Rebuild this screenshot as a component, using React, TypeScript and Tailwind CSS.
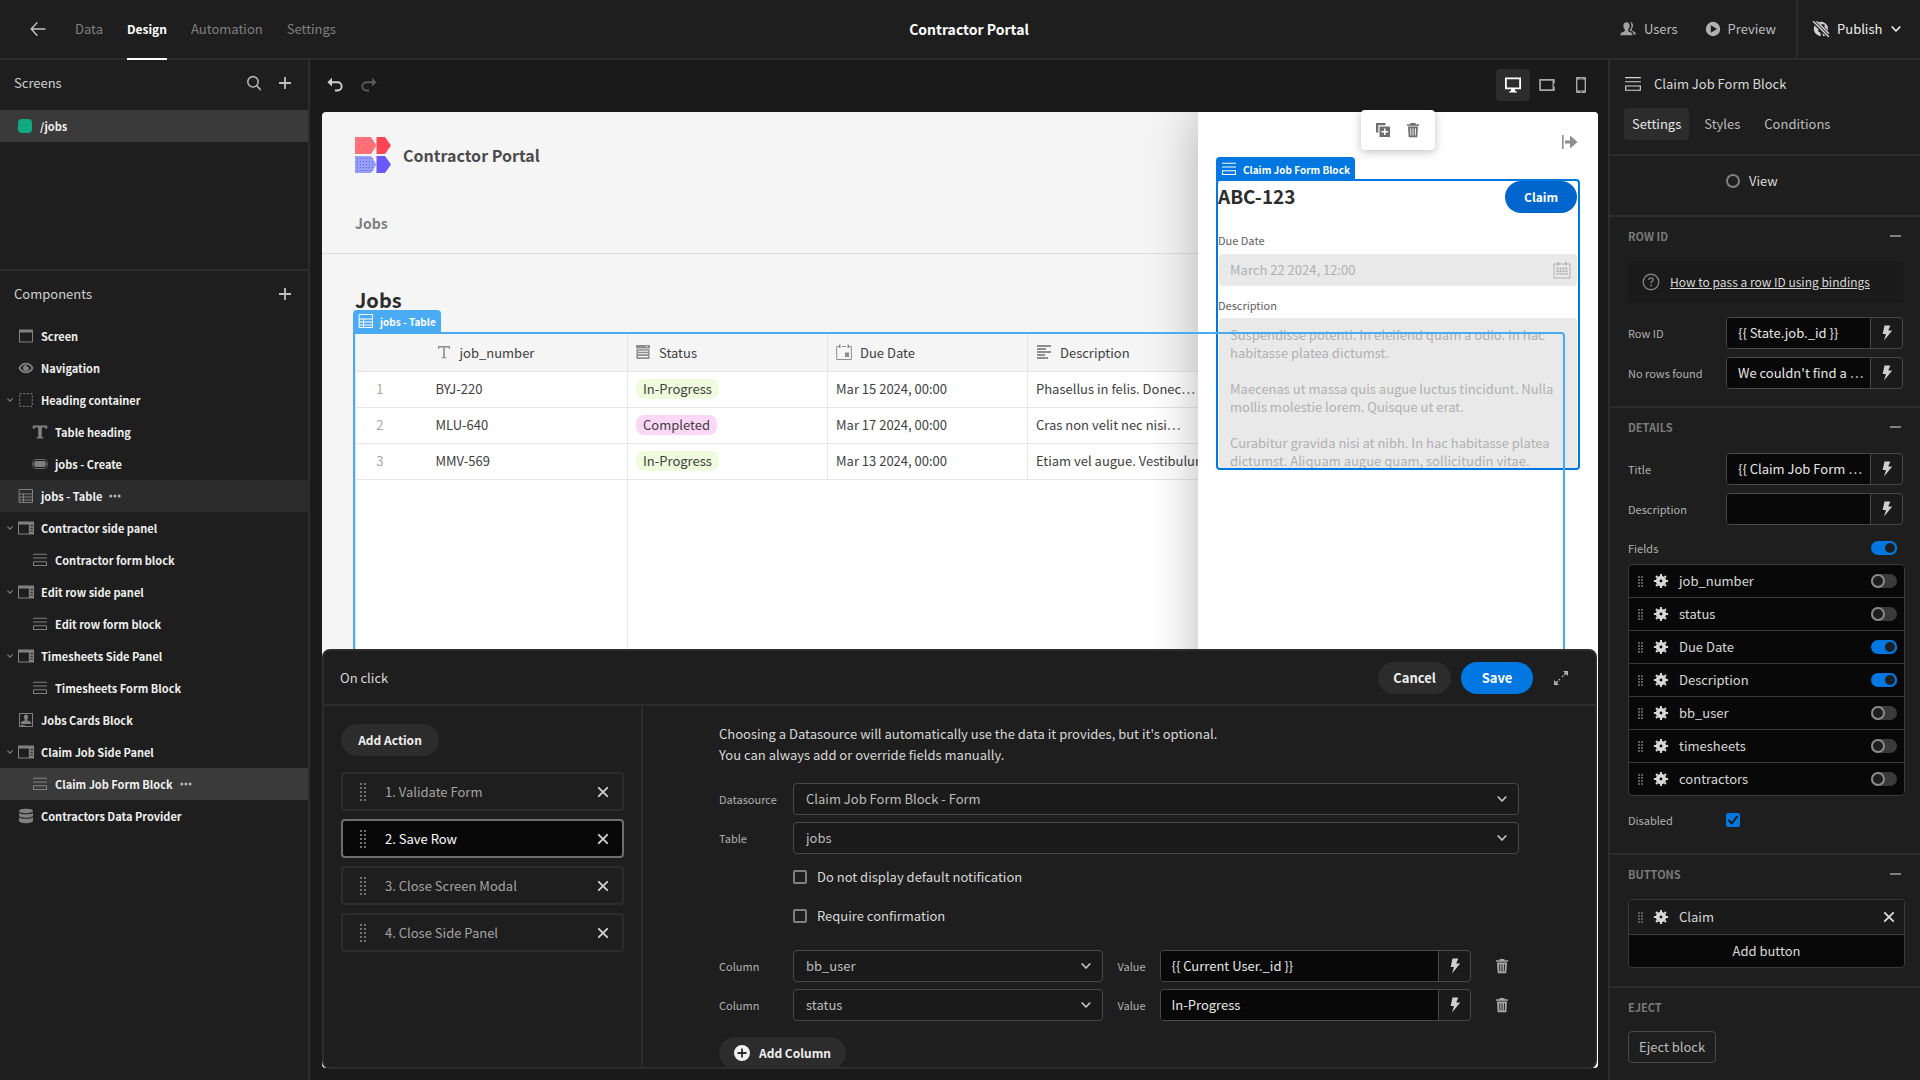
import React, { useState } from "react";

type IconProps = { className?: string; size?: number };

const svg = (size: number, className: string | undefined, children: React.ReactNode, box = "0 0 16 16") => (
  <svg aria-hidden="true" width={size} height={size} viewBox={box} fill="currentColor" className={className ? "shrink-0 " + className : "shrink-0"}>
    {children}
  </svg>
);

const stroke = { fill: "none", stroke: "currentColor", strokeLinecap: "round", strokeLinejoin: "round" } as const;

const BackIcon = ({ className, size = 16 }: IconProps) => svg(size, className, <path {...stroke} strokeWidth="1.4" d="M15 8H1.5M7 1.8 1.2 8 7 14.2" />);
const SearchIcon = ({ className, size = 16 }: IconProps) =>
  svg(size, className, <g {...stroke} strokeWidth="1.6"><circle cx="7" cy="6.8" r="5.2" /><path d="m10.8 10.8 3.6 3.8" /></g>);
const PlusIcon = ({ className, size = 16 }: IconProps) => svg(size, className, <path d="M7.1 2h1.8v5.1H14v1.8H8.9V14H7.1V8.9H2V7.1h5.1z" />);
const UndoIcon = ({ className, size = 16 }: IconProps) =>
  svg(size, className, <><path fill="none" stroke="currentColor" strokeWidth="1.9" d="M3.5 5.2h7a4.1 4.1 0 0 1 0 8.3H8" /><path d="M5 .8v8.8L.4 5.2z" /></>);
const ChevronIcon = ({ className, size = 10 }: IconProps) => svg(size, className, <path {...stroke} strokeWidth="1.7" d="m1.2 3 3.8 4 3.8-4" />, "0 0 10 10");
const CrossIcon = ({ className, size = 12 }: IconProps) => svg(size, className, <path {...stroke} strokeWidth="1.9" d="m1.8 1.8 8.4 8.4m0-8.4-8.4 8.4" />, "0 0 12 12");
const UsersIcon = ({ className }: IconProps) =>
  svg(16, className, <><path d="M6.5 1.2c2 0 3.1 1.5 3.1 3.5 0 1.600-.8 3-1.500 3.700v1.400c0 .5.4.8 1 1 2.500.7 3.400 1.400 3.400 3.400H.3c0-2 1-2.700 3.500-3.400.6-.2 1-.5 1-1V8.400C4 7.700 3.400 6.300 3.400 4.700c0-2 1.100-3.500 3.100-3.500z" /><path d="M10 1c1.900.1 3 1.500 3 3.400 0 1.500-.6 2.800-1.300 3.500v1.200c0 .4.3.7.8.9 2.300.7 3.300 1.600 3.400 3.600h-2.300c-.2-2.500-1.700-3.300-3.900-4v-.8c1-.8 1.700-2.400 1.700-4.100 0-1.500-.5-2.800-1.400-3.700z" /></>);
const PlayIcon = ({ className }: IconProps) =>
  svg(16, className, <path fillRule="evenodd" d="M8 .8a7.200 7.200 0 1 0 0 14.400A7.200 7.200 0 0 0 8 .8zM5.800 4.300v7.400L12 8z" />);
const PublishIcon = ({ className }: IconProps) =>
  svg(18, className, <>
    <path d="M6.500 2.300A7.200 7.200 0 0 1 15.700 6.500l.3 4.200-3.800-3.900L13 4.900l-2.200-1-1.200.9zM2.300 5.200l4.300 4.300-.6 1.800 2.200 1.200.8 3.500A7.100 7.100 0 0 1 1.800 9.200zM10 13l3.500 2.400-2.200.9z" />
    <path {...stroke} strokeWidth="1.500" d="M1.500 1.500 16.500 16.500M5 1.800 16.500 13.300" />
  </>, "0 0 18 18");
const DesktopIcon = ({ className }: IconProps) =>
  svg(18, className, <path fillRule="evenodd" d="M1 1.500h16v11.700h-6v1.600l2 1v.7H5v-.7l2-1v-1.600H1zM2.800 3.300v8.100h12.400V3.300z" />, "0 0 18 18");
const TabletIcon = ({ className }: IconProps) =>
  svg(16, className, <path fillRule="evenodd" d="M1 2h14a.8.8 0 0 1 .8.800V6.500h-1v3h1v3.700a.8.800 0 0 1-.8.800H1a.8.800 0 0 1-.8-.8V2.800A.8.800 0 0 1 1 2zm.9 1.700v8.600h11.600V3.700z" />);
const PhoneIcon = ({ className }: IconProps) =>
  svg(16, className, <path fillRule="evenodd" d="M4 0h8a1 1 0 0 1 1 1v14a1 1 0 0 1-1 1H4a1 1 0 0 1-1-1V1a1 1 0 0 1 1-1zm.4 2.500v11h7.200v-11zM6.500 1v.6h3V1zm.8 13.300v1h1.400v-1z" />);
const ScreenIcon = ({ className }: IconProps) => svg(16, className, <path fillRule="evenodd" d="M1 1.500h14v13H1zM2 4.500v9h12v-9z" />);
const EyeIcon = ({ className }: IconProps) =>
  svg(16, className, <><path fill="none" stroke="currentColor" strokeWidth="1.800" d="M1.500 8C3 5 5.400 3.700 8 3.700S13 5 14.500 8c-1.500 3-3.900 4.300-6.500 4.300S3 11 1.500 8z" /><path d="M8 5a3 3 0 1 0 3 3c0-.4 0-.7-.2-1A1.300 1.300 0 0 1 9 5.200C8.700 5 8.400 5 8 5z" /></>);
const ContainerIcon = ({ className }: IconProps) => svg(16, className, <rect x="1.700" y="1.700" width="12.600" height="12.600" fill="none" stroke="currentColor" strokeWidth="1" strokeDasharray="2.100 1.500" />);
const HeadingIcon = ({ className }: IconProps) => svg(16, className, <path d="M.8 1.500h14.400V5h-1.100l-.8-1.500H9.800v9.400l1.700.6v1h-7v-1l1.700-.6V3.500H2.700L1.900 5H.8z" />);
const ButtonIcon = ({ className }: IconProps) =>
  svg(16, className, <><rect x=".4" y="3.400" width="15.200" height="9.200" rx="4.600" fill="none" stroke="currentColor" strokeWidth=".8" /><rect x="2" y="5" width="12" height="6" rx="3" /></>);
const TableIcon = ({ className }: IconProps) => svg(16, className, <path {...stroke} strokeWidth="1" d="M1.500 1.500h13v13h-13zM1.500 6h13M1.500 9h13M1.500 12h13M5.500 6v8.500" />);
const SidePanelIcon = ({ className }: IconProps) =>
  svg(16, className, <path fillRule="evenodd" d="M0 1.500h16v13H0zM1 4.500v9h9.800v-9zm11.300.5v1h2.700V5zm0 2.700v1h2.700v-1zm0 2.800v1h2.700v-1z" />);
const FormIcon = ({ className, size = 16 }: IconProps) => svg(size, className, <path fillRule="evenodd" d="M1 1.800h14v1H1zM1 5.500h14v1H1zM1 9.300h14V14H1zM2 10.300V13h12v-2.700z" />);
const CardIcon = ({ className }: IconProps) =>
  svg(16, className, <><rect x="1.500" y="1.500" width="13" height="13" fill="none" stroke="currentColor" /><path d="M8 2.500c1.500 0 2.200 1 2.200 2.400 0 1-.5 2-1 2.500v1c1.500.5 4 .8 4 2.300V12H2.800v-1.300c0-1.500 2.500-1.800 4-2.300v-1c-.5-.5-1-1.500-1-2.500C5.800 3.500 6.500 2.500 8 2.500zM3 13h4v1H3z" /></>);
const DataIcon = ({ className }: IconProps) =>
  svg(16, className, <path d="M8 .8c4 0 7 .9 7 2.200S12 5.200 8 5.200 1 4.300 1 3 4 .8 8 .8zM1 4.700c1 1 3.700 1.600 7 1.600s6-.6 7-1.600v3c0 1-3 2-7 2s-7-1-7-2zm0 4.500c1 1 3.700 1.600 7 1.600s6-.6 7-1.600v3.500c0 1.300-3 2.500-7 2.500s-7-1.200-7-2.500z" />);
const DotsIcon = ({ className }: IconProps) => svg(12, className, <><circle cx="1.800" cy="6" r="1.500" /><circle cx="6" cy="6" r="1.500" /><circle cx="10.200" cy="6" r="1.500" /></>, "0 0 12 12");
const TextIcon = ({ className }: IconProps) => svg(14, className, <path d="M1 1h12v3h-1l-.5-1.500H7.800v9.500l1.700.4v.8h-5v-.8l1.700-.4V2.500H2.500L2 4H1z" />, "0 0 14 14");
const OptionsIcon = ({ className }: IconProps) =>
  svg(14, className, <path fillRule="evenodd" d="M0 0h14v3.500H0zm9.800 1 1.200 1.300L12.200 1zM.5 4.300h13V14H.5zM2 5.700v1h10v-1zm0 2.600v1h10v-1zm0 2.600v1.400h10v-1.400z" />, "0 0 14 14");
const DateIcon = ({ className }: IconProps) =>
  svg(16, className, <><path fill="none" stroke="currentColor" d="M3 2.500H.7v13h14.600v-13H13M6 2.500h4" /><path d="M3 .5h1.500V4H3zM11.500.5H13V4h-1.500zM9 8.500h4V13H9z" /></>);
const LinesIcon = ({ className }: IconProps) => svg(14, className, <path d="M0 0h14v2H0zM0 3h9v2H0zM0 6h14v2H0zM0 9h8v2H0zM0 12h11v2H0z" />, "0 0 14 14");
const DuplicateIcon = ({ className }: IconProps) =>
  svg(16, className, <path fillRule="evenodd" d="M1 1h9.500v2.300H3.300v7.200H1zM4.500 4.500H15V15H4.500zm4.500 2v2.500H6.500v1.500H9V13h1.500v-2.500H13V9h-2.500V6.500z" />);
const TrashIcon = ({ className, size = 16 }: IconProps) =>
  svg(size, className, <path fillRule="evenodd" d="M5.500 1h5v1.300H14v1.500H2V2.300h3.500zM3 4.600h10l-.7 10.600H3.700zM5.200 6.200l.3 7.300h.9l-.3-7.300zm2.400 0v7.300h.9V6.200zm2.500 0-.3 7.300h.9l.3-7.300z" />);
const CollapseIcon = ({ className }: IconProps) => svg(16, className, <path d="M0 1h1.600v14H0zM3 6.500h5V1.500L15.500 8 8 14.500V9.500H3z" />);
const CalendarIcon = ({ className }: IconProps) =>
  svg(18, className, <><path fill="none" stroke="currentColor" d="M1 3h16v14H1z" /><path d="M4.500 1H6v3.500H4.500zM12 1h1.500v3.500H12z" />
    {[6.500, 9.200, 11.900].map((y) => [3.500, 6.500, 9.500, 12.500].map((x) => <rect key={x + "-" + y} x={x} y={y} width="2" height="1.800" />))}</>, "0 0 18 18");
const ExpandIcon = ({ className }: IconProps) =>
  svg(16, className, <><path {...stroke} strokeWidth="1.500" d="m9.500 6.500.3-.3M11.500 4.500 13 3M6.500 9.500l-.3.3M4.500 11.500 3 13" /><path d="M10 1h5v5zM6 15H1v-5z" /></>);
const BoltIcon = ({ className }: IconProps) => svg(16, className, <path d="M5.500.5h5.800L9.200 5.500h4L5 15.500 7 9H3.700z" />);
const GearIcon = ({ className }: IconProps) =>
  svg(16, className, <><circle cx="8" cy="8" r="3.300" fill="none" stroke="currentColor" strokeWidth="3.700" /><path fill="none" stroke="currentColor" strokeWidth="2" d="M8 .9V3M8 13v2.100M.9 8H3M13 8h2.100M3 3l1.500 1.500M11.500 11.500 13 13M3 13l1.500-1.500M11.500 4.500 13 3" /></>);
const HelpIcon = ({ className }: IconProps) =>
  svg(18, className, <><circle cx="9" cy="9" r="7.800" fill="none" stroke="currentColor" strokeWidth="1.400" /><path fill="none" stroke="currentColor" strokeWidth="1.500" d="M6.800 6.900c0-1.200.9-1.900 2.200-1.900s2.200.7 2.200 1.800c0 1.500-2.100 1.500-2.100 3.400" /><circle cx="9.100" cy="12.500" r=".95" /></>, "0 0 18 18");
const AddCircleIcon = ({ className }: IconProps) =>
  svg(16, className, <path fillRule="evenodd" d="M8 0a8 8 0 1 0 0 16A8 8 0 0 0 8 0zm-.9 3.500h1.800v3.600h3.600v1.800H8.900v3.600H7.100V8.900H3.500V7.100h3.600z" />);
const GripIcon = ({ className }: IconProps) => (
  <svg aria-hidden="true" width="6" height="18" viewBox="0 0 6 18" fill="currentColor" className={"shrink-0 " + className}>
    {[0, 4, 8, 12, 16].map((y) => [<rect key={y + "a"} x="0" y={y} width="2" height="2" />, <rect key={y + "b"} x="4" y={y} width="2" height="2" />])}
  </svg>
);
const SmallGripIcon = ({ className }: IconProps) => (
  <svg aria-hidden="true" width="5" height="11" viewBox="0 0 5 11" fill="currentColor" className={"shrink-0 " + className}>
    {[0, 3, 6, 9].map((y) => [<rect key={y + "a"} x="0" y={y} width="2" height="2" />, <rect key={y + "b"} x="3" y={y} width="2" height="2" />])}
  </svg>
);
const Logo = () => (
  <svg aria-hidden="true" width="36" height="36" viewBox="0 0 36 36" className="shrink-0">
    <path fill="#ff7179" d="M0 0h16l5.500 8.500L16 17H0z" />
    <path fill="#ff4552" d="M21.500 0H30l6 8.500-6 8.500h-8.500z" />
    <path fill="#949ffa" d="M0 19h16l5.500 8.500L16 36H0z" />
    <path fill="#6a58fa" d="M21.500 19H30l6 8.500-6 8.500h-8.500z" />
    {[21, 24, 27, 30, 33].map((y) => [2, 5, 8, 11, 14, 17].map((x) => <rect key={x + "-" + y} x={x} y={y} width="1" height="1" fill="#6a58fa" />))}
    {[[4, 7], [10, 6], [14, 9], [8, 12], [12, 14]].map(([x, y]) => <rect key={x} x={x} y={y} width="1" height="1" fill="#ff4552" />)}
  </svg>
);

const Switch = ({ label, on }: { label: string; on: boolean }) => {
  const [value, setValue] = useState(on);
  return (
    <input
      type="checkbox"
      role="switch"
      aria-label={label}
      checked={value}
      onChange={() => setValue(!value)}
      className="h-[14px] w-[26px] shrink-0 appearance-none rounded-full bg-[#3a3a3a] before:block before:size-[14px] before:rounded-full before:border-2 before:border-[#8a8a8a] before:bg-[#1e1e1e] checked:bg-[#0177e1] checked:before:ml-3 checked:before:border-[#0177e1]"
    />
  );
};

const SelectBox = ({ id, value, className }: { id: string; value: string; className: string }) => (
  <div className={"relative " + className}>
    <select id={id} className="h-8 w-full appearance-none rounded border border-[#484848] bg-[#1a1a1a] pr-8 pl-3 text-[13px] text-[#bcbcbc]">
      <option>{value}</option>
    </select>
    <ChevronIcon className="pointer-events-none absolute top-[11px] right-3 text-[#c4c4c4]" />
  </div>
);

const BindingInput = ({ id, value, className }: { id: string; value: string; className: string }) => (
  <div className={"flex h-8 overflow-hidden rounded border border-[#484848] bg-[#1a1a1a] " + className}>
    <input id={id} defaultValue={value} className="min-w-0 flex-1 bg-[#080808] pr-1 pl-[11px] text-[13px] text-[#e6e6e6]" />
    <button aria-label="Open bindings" className="flex w-8 items-center justify-center border-l border-[#484848] text-[#d0d0d0]">
      <BoltIcon />
    </button>
  </div>
);

type Node = { name: string; icon: React.FC<IconProps>; level?: number; open?: boolean; state?: "hover" | "selected" };

const tree: Node[] = [
  { name: "Screen", icon: ScreenIcon },
  { name: "Navigation", icon: EyeIcon },
  { name: "Heading container", icon: ContainerIcon, open: true },
  { name: "Table heading", icon: HeadingIcon, level: 1 },
  { name: "jobs - Create", icon: ButtonIcon, level: 1 },
  { name: "jobs - Table", icon: TableIcon, state: "hover" },
  { name: "Contractor side panel", icon: SidePanelIcon, open: true },
  { name: "Contractor form block", icon: FormIcon, level: 1 },
  { name: "Edit row side panel", icon: SidePanelIcon, open: true },
  { name: "Edit row form block", icon: FormIcon, level: 1 },
  { name: "Timesheets Side Panel", icon: SidePanelIcon, open: true },
  { name: "Timesheets Form Block", icon: FormIcon, level: 1 },
  { name: "Jobs Cards Block", icon: CardIcon },
  { name: "Claim Job Side Panel", icon: SidePanelIcon, open: true },
  { name: "Claim Job Form Block", icon: FormIcon, level: 1, state: "selected" },
  { name: "Contractors Data Provider", icon: DataIcon },
];

const TopBar = () => (
  <header className="flex h-[60px] shrink-0 items-stretch border-b-2 border-[#2c2c2c]">
    <nav className="flex flex-1 items-center pl-[30px] text-[13px] text-[#808080]">
      <button aria-label="Back" className="mr-[29px] text-[#c4c4c4]"><BackIcon /></button>
      <div className="flex items-center gap-6">
        <a href="#data">Data</a>
        <a href="#design" className="-mb-[2px] flex h-[60px] items-center border-b-2 border-white text-[12px] font-bold text-white">Design</a>
        <a href="#automation">Automation</a>
        <a href="#settings">Settings</a>
      </div>
    </nav>
    <h1 className="flex items-center pr-3 text-[14px] font-bold text-white">Contractor Portal</h1>
    <div className="flex flex-1 items-stretch justify-end text-[13px] text-[#bcbcbc]">
      <button className="mr-[27px] flex items-center gap-2"><UsersIcon className="text-[#a0a0a0]" />Users</button>
      <button className="mr-5 flex items-center gap-[7px]"><PlayIcon className="text-[#b0b0b0]" />Preview</button>
      <button className="flex w-[124px] items-center gap-[7px] border-l-2 border-[#2c2c2c] pl-[14px] text-[#ededed]">
        <PublishIcon className="text-[#d0d0d0]" />Publish<ChevronIcon className="ml-[2px]" />
      </button>
    </div>
  </header>
);

const LeftPanel = () => (
  <aside className="flex w-[310px] shrink-0 flex-col border-r-2 border-[#2c2c2c]">
    <section className="flex h-[211px] flex-col border-b-2 border-[#2c2c2c]">
      <div className="mb-1 flex h-[46px] items-center pr-[15px] pl-[14px] text-[13px] text-[#d0d0d0]">
        <h2 className="flex-1">Screens</h2>
        <button aria-label="Search screens" className="mr-[15px] text-[#b0b0b0]"><SearchIcon /></button>
        <button aria-label="Add screen" className="text-[#c0c0c0]"><PlusIcon /></button>
      </div>
      <button className="flex h-8 items-center gap-2 bg-[#3a3a3a] pl-[18px] text-[11px] font-bold text-[#f0f0f0]">
        <span className="size-[14px] rounded bg-[#11a97f]" />/jobs
      </button>
    </section>
    <section>
      <div className="mb-[3px] flex h-[46px] items-center pr-[15px] pl-[14px] text-[13px] text-[#d0d0d0]">
        <h2 className="flex-1">Components</h2>
        <button aria-label="Add component" className="text-[#c0c0c0]"><PlusIcon /></button>
      </div>
      <ul>
        {tree.map((node) => (
          <li
            key={node.name}
            className={
              "flex h-8 items-center text-[11px] font-bold text-[#f0f0f0] " +
              (node.level ? "pl-[32px] " : "pl-[7px] ") +
              (node.state === "selected" ? "bg-[#3a3a3a]" : node.state === "hover" ? "bg-[#2c2c2c]" : "")
            }
          >
            {!node.level && <span className="w-[11px] shrink-0 text-[#808080]">{node.open && <ChevronIcon size={6} />}</span>}
            <node.icon className="mr-[7px] text-[#808080]" />
            <span>{node.name}</span>
            {node.state && <button aria-label={"Actions for " + node.name} className="ml-[7px] text-[#b5b5b5]"><DotsIcon /></button>}
          </li>
        ))}
      </ul>
    </section>
  </aside>
);

const rows = [
  { id: 1, job: "BYJ-220", status: "In-Progress", due: "Mar 15 2024, 00:00", text: "Phasellus in felis. Donec…" },
  { id: 2, job: "MLU-640", status: "Completed", due: "Mar 17 2024, 00:00", text: "Cras non velit nec nisi…" },
  { id: 3, job: "MMV-569", status: "In-Progress", due: "Mar 13 2024, 00:00", text: "Etiam vel augue. Vestibulum ante" },
];

const JobsTable = () => (
  <div className="relative mx-[33px] mt-[18px] flex min-h-0 flex-1 flex-col">
    <div className="pointer-events-none absolute -top-[2px] right-0 -bottom-1 -left-[2px] z-30 rounded-tr border-2 border-[#4aabf5]" />
    <div className="absolute -top-6 -left-[2px] z-30 flex h-[22px] items-center gap-1.5 rounded-t bg-[#4aabf5] px-[5px] text-[10px] font-bold text-white">
      <TableIcon />jobs - Table
    </div>
    <table className="w-full table-fixed border-l border-[#e6e6e6] text-left text-[13px] text-[#404040]">
      <colgroup><col className="w-[50px]" /><col className="w-[222px]" /><col className="w-[200px]" /><col className="w-[200px]" /><col /></colgroup>
      <thead>
        <tr className="h-[37px] border-b border-[#e6e6e6] bg-[#f5f5f5] [&_svg]:text-[#8e8e8e]">
          <th aria-label="Row" />
          <th className="border-r border-[#e6e6e6] pl-[31px] font-normal"><span className="flex items-center gap-[9px]"><TextIcon />job_number</span></th>
          <th className="border-r border-[#e6e6e6] pl-2 font-normal"><span className="flex items-center gap-[9px]"><OptionsIcon />Status</span></th>
          <th className="border-r border-[#e6e6e6] pl-2 font-normal"><span className="flex items-center gap-2"><DateIcon />Due Date</span></th>
          <th className="pl-[9px] font-normal"><span className="flex items-center gap-[9px]"><LinesIcon />Description</span></th>
        </tr>
      </thead>
      <tbody>
        {rows.map((row) => (
          <tr key={row.id} className="h-9 border-b border-[#e6e6e6] bg-white">
            <td className="pr-[2px] text-center text-[#a8a8a8]">{row.id}</td>
            <td className="border-r border-[#e6e6e6] pl-[30px]">{row.job}</td>
            <td className="border-r border-[#e6e6e6] pl-2">
              <span className={"flex h-5 w-fit items-center rounded-lg px-[7px] " + (row.status === "Completed" ? "bg-[#fcd8f6]" : "bg-[#eefbdd]")}>{row.status}</span>
            </td>
            <td className="border-r border-[#e6e6e6] pl-2">{row.due}</td>
            <td className="pl-2 whitespace-nowrap">{row.text}</td>
          </tr>
        ))}
      </tbody>
    </table>
    <div className="flex flex-1 border-l border-[#e6e6e6] bg-white"><div className="w-[272px] border-r border-[#e6e6e6]" /></div>
  </div>
);

const description =
  "Suspendisse potenti. In eleifend quam a odio. In hac habitasse platea dictumst.\n\nMaecenas ut massa quis augue luctus tincidunt. Nulla mollis molestie lorem. Quisque ut erat.\n\nCurabitur gravida nisi at nibh. In hac habitasse platea dictumst. Aliquam augue quam, sollicitudin vitae.";

const SidePanel = () => (
  <div className="absolute inset-y-0 right-0 z-20 w-[400px] bg-white px-[18px] shadow-[0_0_48px_rgba(0,0,0,0.28)]">
    <div className="flex h-[67px] items-start justify-end pt-[22px] pr-[2px] text-[#8e8e8e]">
      <button aria-label="Close panel"><CollapseIcon /></button>
    </div>
    <div className="relative h-[291px] rounded border-2 border-[#0177e1]">
      <div className="absolute -top-6 -left-[2px] flex h-6 items-center gap-1.5 rounded-t bg-[#0177e1] px-[5px] text-[10px] font-bold text-white">
        <FormIcon />Claim Job Form Block
      </div>
      <div className="flex h-full flex-col overflow-hidden">
        <div className="flex shrink-0 justify-between">
          <h3 className="text-[19px] leading-[30px] font-bold text-[#2c2c2c]">ABC-123</h3>
          <button className="mr-px h-8 w-[72px] rounded-full bg-[#0065cc] text-[12px] font-bold text-white">Claim</button>
        </div>
        <label htmlFor="due" className="mt-[18px] text-[11px] leading-[18px] text-[#5e5e5e]">Due Date</label>
        <div className="mx-px mt-[5px] flex h-8 shrink-0 items-center rounded bg-[#e9e9e9] pr-[6px] pl-[11px] text-[#b0b0b0]">
          <input id="due" defaultValue="March 22 2024, 12:00" className="min-w-0 flex-1 text-[13px]" />
          <CalendarIcon />
        </div>
        <label htmlFor="desc" className="mt-[10px] text-[11px] leading-[18px] text-[#5e5e5e]">Description</label>
        <textarea id="desc" defaultValue={description} className="mx-px mt-1 h-[200px] shrink-0 resize-none overflow-hidden rounded bg-[#e9e9e9] px-[11px] pt-2 text-[13px] leading-[18px] text-[#b0b0b0]" />
      </div>
    </div>
  </div>
);

const actions = ["1. Validate Form", "2. Save Row", "3. Close Screen Modal", "4. Close Side Panel"];

const ActionDrawer = () => (
  <div role="dialog" aria-label="On click" className="absolute right-px -bottom-px left-0 z-40 flex h-[420px] flex-col overflow-hidden rounded-lg border-2 border-[#2c2c2c] bg-[#1e1e1e]">
    <div className="flex h-[55px] shrink-0 items-center border-b-2 border-[#2c2c2c] pr-[26px] pl-4 text-[13px]">
      <h2 className="flex-1 text-[#d8d8d8]">On click</h2>
      <button className="mr-[10px] h-8 w-[73px] rounded-full bg-[#2c2c2c] font-bold text-[#f0f0f0]">Cancel</button>
      <button className="mr-5 h-8 w-[72px] rounded-full bg-[#0177e1] font-bold text-white">Save</button>
      <button aria-label="Expand" className="text-[#b0b0b0]"><ExpandIcon /></button>
    </div>
    <div className="flex min-h-0 flex-1">
      <div className="w-[319px] shrink-0 border-r-2 border-[#2c2c2c] px-[17px] pt-[18px]">
        <button className="h-8 w-[98px] rounded-full bg-[#2c2c2c] text-[12px] font-bold text-[#f0f0f0]">Add Action</button>
        <ul className="mt-4 flex flex-col gap-2">
          {actions.map((action, i) => (
            <li
              key={action}
              className={"flex h-[39px] items-center rounded border-2 pr-[13px] pl-[17px] text-[13px] " + (i === 1 ? "border-[#6e6e6e] bg-[#080808] text-white" : "border-[#2c2c2c] text-[#a4a4a4]")}
            >
              <GripIcon className="mr-[19px] text-[#707070]" />
              <span className="flex-1">{action}</span>
              <button aria-label={"Remove " + action} className="text-[#d0d0d0]"><CrossIcon /></button>
            </li>
          ))}
        </ul>
      </div>
      <div className="min-w-0 flex-1 overflow-hidden pt-[17px] pr-[76px] pl-[76px] text-[11px] text-[#b0b0b0]">
        <p className="text-[13px] leading-[21px] text-[#d8d8d8]">
          Choosing a Datasource will automatically use the data it provides, but it's optional.<br />You can always add or override fields manually.
        </p>
        <div className="mt-[18px] flex flex-col gap-[7px]">
          <div className="flex items-center"><label htmlFor="datasource" className="w-[74px]">Datasource</label><SelectBox id="datasource" value="Claim Job Form Block - Form" className="flex-1" /></div>
          <div className="flex items-center"><label htmlFor="table" className="w-[74px]">Table</label><SelectBox id="table" value="jobs" className="flex-1" /></div>
          {["Do not display default notification", "Require confirmation"].map((text) => (
            <label key={text} className="ml-[74px] flex h-8 w-fit items-center gap-[10px] text-[13px] text-[#d8d8d8]">
              <input type="checkbox" className="size-[14px] appearance-none rounded-xs border-2 border-[#808080] checked:bg-[#0177e1]" />{text}
            </label>
          ))}
        </div>
        <div className="mt-[18px] flex flex-col gap-[7px]">
          {[["bb_user", "{{ Current User._id }}"], ["status", "In-Progress"]].map(([column, value]) => (
            <div key={column} className="flex items-center">
              <label htmlFor={"col-" + column} className="w-[74px]">Column</label>
              <SelectBox id={"col-" + column} value={column} className="flex-1" />
              <label htmlFor={"val-" + column} className="w-[57px] pl-[15px]">Value</label>
              <BindingInput id={"val-" + column} value={value} className="flex-1" />
              <button aria-label={"Delete " + column} className="mr-[9px] ml-[23px] text-[#a8a8a8]"><TrashIcon /></button>
            </div>
          ))}
        </div>
        <button className="mt-4 flex h-8 items-center gap-[9px] rounded-full bg-[#2c2c2c] px-[15px] text-[12px] font-bold text-[#f0f0f0]">
          <AddCircleIcon />Add Column
        </button>
      </div>
    </div>
  </div>
);

const Canvas = () => (
  <main className="flex min-w-0 flex-1 flex-col bg-[#1a1a1a] pr-[10px] pb-3 pl-3">
    <div className="mb-[2px] flex h-[50px] shrink-0 items-center pl-[5px] text-[#d0d0d0]">
      <button aria-label="Undo"><UndoIcon /></button>
      <button aria-label="Redo" className="ml-[18px] -scale-x-100 text-[#5a5a5a]"><UndoIcon /></button>
      <div className="ml-auto flex text-[#a8a8a8]">
        <button aria-label="Desktop" className="flex h-8 w-[34px] items-center justify-center rounded bg-[#2c2c2c] text-white"><DesktopIcon /></button>
        <button aria-label="Tablet" className="flex h-8 w-[34px] items-center justify-center"><TabletIcon /></button>
        <button aria-label="Mobile" className="flex h-8 w-[34px] items-center justify-center"><PhoneIcon /></button>
      </div>
    </div>
    <div className="relative min-h-0 flex-1">
      <div className="relative flex h-full flex-col overflow-hidden rounded bg-[#f5f5f5]">
        <div className="border-b border-[#dedede] px-[33px] pt-[25px]">
          <div className="flex items-center gap-3"><Logo /><span className="text-[16px] leading-[34px] font-bold text-[#4b4b4b]">Contractor Portal</span></div>
          <a href="#jobs" className="mt-[38px] block h-[42px] text-[14px] leading-[24px] font-bold text-[#808080]">Jobs</a>
        </div>
        <h2 className="mt-[30px] ml-[33px] text-[20px] leading-[32px] font-bold text-[#2c2c2c]">Jobs</h2>
        <JobsTable />
        <SidePanel />
      </div>
      <div className="absolute -top-[2px] right-[163px] z-40 flex h-10 w-[74px] items-center justify-center gap-[14px] rounded bg-white text-[#6e6e6e] shadow-[0_2px_10px_rgba(0,0,0,0.25)]">
        <button aria-label="Duplicate"><DuplicateIcon /></button>
        <button aria-label="Delete"><TrashIcon /></button>
      </div>
      <ActionDrawer />
    </div>
  </main>
);

const SectionHead = ({ title, collapsible = true }: { title: string; collapsible?: boolean }) => (
  <div className="flex h-[38px] items-center justify-between pr-[19px] pl-[18px] text-[11px] font-bold text-[#7a7a7a]">
    <h3 className="leading-[16px]">{title}</h3>
    {collapsible && <button aria-label={"Collapse " + title} className="h-[2px] w-[11px] bg-[#808080]" />}
  </div>
);

const BindingRow = ({ id, label, value }: { id: string; label: string; value: string }) => (
  <div className="flex items-center pr-[17px] pl-[18px]">
    <label htmlFor={id} className="w-[98px] text-[11px] text-[#b0b0b0]">{label}</label>
    <BindingInput id={id} value={value} className="flex-1" />
  </div>
);

const fields: [string, boolean][] = [
  ["job_number", false],
  ["status", false],
  ["Due Date", true],
  ["Description", true],
  ["bb_user", false],
  ["timesheets", false],
  ["contractors", false],
];

const RightPanel = () => (
  <aside className="flex w-[312px] shrink-0 flex-col border-l-2 border-[#2c2c2c] text-[#d8d8d8]">
    <div className="border-b-2 border-[#2c2c2c] px-[14px] pt-2 pb-[14px]">
      <h2 className="flex h-8 items-center gap-3 text-[13px]"><FormIcon size={18} />Claim Job Form Block</h2>
      <div className="mt-2 flex gap-[6px] text-[13px] text-[#bcbcbc]">
        <button className="h-8 rounded bg-[#2c2c2c] px-2 text-[#e6e6e6]">Settings</button>
        <button className="h-8 px-[9px]">Styles</button>
        <button className="h-8 px-[9px]">Conditions</button>
      </div>
    </div>
    <div className="h-[61px] border-b-2 border-[#2c2c2c] pt-[9px] pl-[116px]">
      <label className="flex h-8 w-fit items-center gap-[9px] text-[13px]">
        <input type="radio" name="type" className="size-[14px] appearance-none rounded-full border-2 border-[#808080]" />View
      </label>
    </div>
    <section className="border-b-2 border-[#2c2c2c] pb-[17px]">
      <SectionHead title="ROW ID" />
      <div className="mt-[6px] mr-[17px] mb-[14px] ml-[18px] flex h-[42px] items-center gap-[10px] rounded bg-[#1a1a1a] pb-px pl-[14px] text-[12px]">
        <HelpIcon className="text-[#808080]" />
        <a href="#bindings" className="underline">How to pass a row ID using bindings</a>
      </div>
      <div className="flex flex-col gap-2">
        <BindingRow id="row-id" label="Row ID" value="{{ State.job._id }}" />
        <BindingRow id="no-rows" label="No rows found" value="We couldn't find a …" />
      </div>
    </section>
    <section className="border-b-2 border-[#2c2c2c] pb-[17px]">
      <SectionHead title="DETAILS" />
      <div className="mt-[7px] flex flex-col gap-2">
        <BindingRow id="title" label="Title" value="{{ Claim Job Form …" />
        <BindingRow id="description" label="Description" value="" />
      </div>
      <div className="mt-[7px] flex h-8 items-center justify-between pr-[23px] pl-[18px] text-[11px] text-[#b0b0b0]">
        Fields<Switch label="All fields" on />
      </div>
      <ul className="mr-[15px] ml-[18px] divide-y divide-[#3a3a3a] overflow-hidden rounded border border-[#3a3a3a] bg-[#080808] text-[13px]">
        {fields.map(([name, on]) => (
          <li key={name} className="flex h-[33px] items-center pr-[7px] pl-[9px] last:h-8">
            <SmallGripIcon className="mr-[10px] text-[#5a5a5a]" />
            <button aria-label={"Configure " + name} className="mr-[10px]"><GearIcon /></button>
            <span className="flex-1">{name}</span>
            <Switch label={name} on={on} />
          </li>
        ))}
      </ul>
      <div className="mt-2 flex h-8 items-center pl-[18px]">
        <label htmlFor="disabled" className="w-[98px] text-[11px] text-[#b0b0b0]">Disabled</label>
        <span className="relative size-[14px]">
          <input id="disabled" type="checkbox" defaultChecked className="peer block size-[14px] appearance-none rounded-xs border-2 border-[#808080] checked:border-[#0177e1] checked:bg-[#0177e1]" />
          <svg aria-hidden="true" viewBox="0 0 14 14" className="pointer-events-none absolute inset-0 hidden peer-checked:block">
            <path d="m3 7.500 2.800 3L11 3.500" fill="none" stroke="#1a1a1a" strokeWidth="2" strokeLinecap="round" />
          </svg>
        </span>
      </div>
    </section>
    <section className="border-b-2 border-[#2c2c2c] pb-[18px]">
      <SectionHead title="BUTTONS" />
      <div className="mt-[6px] mr-[15px] ml-[18px] overflow-hidden rounded border border-[#3a3a3a] bg-[#080808] text-[13px]">
        <div className="flex h-[35px] items-center border-b border-[#3a3a3a] bg-[#1a1a1a] pr-[9px] pl-[9px]">
          <SmallGripIcon className="mr-[10px] text-[#5a5a5a]" />
          <button aria-label="Configure Claim" className="mr-[10px]"><GearIcon /></button>
          <span className="flex-1">Claim</span>
          <button aria-label="Remove Claim"><CrossIcon /></button>
        </div>
        <button className="h-8 w-full">Add button</button>
      </div>
    </section>
    <section>
      <SectionHead title="EJECT" collapsible={false} />
      <button className="mt-[5px] ml-[18px] h-8 rounded border border-[#484848] px-[10px] text-[13px] text-[#bcbcbc]">Eject block</button>
    </section>
  </aside>
);

export default function App() {
  return (
    <div className="flex h-screen flex-col overflow-hidden bg-[#1e1e1e] font-['Noto_Sans_CJK_SC','Noto_Sans',sans-serif]">
      <TopBar />
      <div className="flex min-h-0 flex-1">
        <LeftPanel />
        <Canvas />
        <RightPanel />
      </div>
    </div>
  );
}
